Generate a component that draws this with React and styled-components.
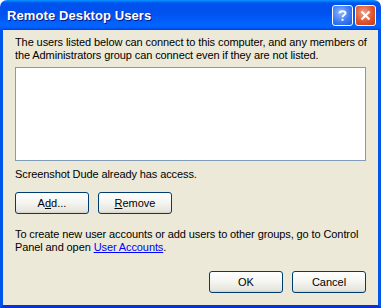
import React from 'react';
import styled, { createGlobalStyle } from 'styled-components';

const GlobalStyle = createGlobalStyle`
    html, body {
        margin: 0;
        padding: 0;
        background: #fff;
    }
`;

const Window = styled.div`
    width: 381px;
    height: 308px;
    display: flex;
    flex-direction: column;
    box-sizing: border-box;
    font-family: "Liberation Sans", Arial, sans-serif;
    font-size: 11px;
    color: #000;
`;

const TitleBar = styled.div`
    height: 30px;
    flex-shrink: 0;
    display: flex;
    align-items: center;
    padding: 0 5px 0 7px;
    border-radius: 7px 7px 0 0;
    background: linear-gradient(to bottom,
        #0997ff 0%, #0053ee 10%, #0050ee 40%, #0066ff 85%, #005bff 93%, #003dd7 100%);
`;

const Title = styled.div`
    flex-grow: 1;
    color: #fff;
    font-family: "Liberation Sans", Arial, sans-serif;
    font-weight: bold;
    font-size: 13px;
    letter-spacing: 0.1px;
    text-shadow: 1px 1px 0 #0a1883;
    padding-top: 1px;
`;

const Controls = styled.div`
    display: flex;
    gap: 2px;
`;

const CtrlButton = styled.div`
    width: 21px;
    height: 21px;
    box-sizing: border-box;
    border: 1px solid #fff;
    border-radius: 3px;
    display: flex;
    align-items: center;
    justify-content: center;
    background: ${p => p.close
        ? 'radial-gradient(circle at 40% 35%, #f3a08a 0%, #e0562f 55%, #c23b12 100%)'
        : 'radial-gradient(circle at 40% 35%, #8fb6ff 0%, #3b7bf5 55%, #1f55d8 100%)'};
`;

const Frame = styled.div`
    flex-grow: 1;
    display: flex;
    flex-direction: column;
    background: #ece9d8;
    border: 3px solid #0055ea;
    border-top: none;
    border-bottom-color: #0831d9;
    padding: 6px 12px 0 12px;
`;

const Text = styled.p`
    margin: 0;
    line-height: 13px;
    white-space: nowrap;
    letter-spacing: -0.1px;
`;

const ListBox = styled.div`
    height: 92px;
    margin: 5px 0 0 0;
    background: #fff;
    border: 1px solid #7f9db9;
`;

const StatusText = styled(Text)`
    margin-top: 7px;
`;

const ButtonRow = styled.div`
    display: flex;
    gap: 9px;
    justify-content: ${p => p.end ? 'flex-end' : 'flex-start'};
    margin-top: ${p => p.gap}px;
`;

const Button = styled.button`
    width: 74px;
    height: 22px;
    box-sizing: border-box;
    border: 1px solid #003c74;
    border-radius: 3px;
    background: linear-gradient(to bottom, #ffffff 0%, #f4f4f0 50%, #e6e5de 90%, #d6d0c5 100%);
    font-family: "Liberation Sans", Arial, sans-serif;
    font-size: 11px;
    color: #000;
    padding: 0;
`;

const InfoText = styled(Text)`
    margin-top: 14px;
`;

const Link = styled.a`
    color: #0000ff;
    text-decoration: underline;
`;

const Key = styled.span`
    text-decoration: underline;
`;

export default function App() {
    return (
        <>
            <GlobalStyle />
            <Window>
                <TitleBar>
                    <Title>Remote Desktop Users</Title>
                    <Controls>
                        <CtrlButton>
                            <svg width="13" height="13" viewBox="0 0 13 13">
                                <path d="M3.5 4.2 C3.5 1.5 9.5 1.5 9.5 4.2 C9.5 6 6.5 6 6.5 8.2" fill="none" stroke="#fff" strokeWidth="2" />
                                <rect x="5.5" y="9.8" width="2" height="2" fill="#fff" />
                            </svg>
                        </CtrlButton>
                        <CtrlButton close>
                            <svg width="13" height="13" viewBox="0 0 13 13">
                                <path d="M2.5 2.5 L10.5 10.5 M10.5 2.5 L2.5 10.5" stroke="#fff" strokeWidth="2.2" />
                            </svg>
                        </CtrlButton>
                    </Controls>
                </TitleBar>
                <Frame>
                    <Text>
                        The users listed below can connect to this computer, and any members of<br />
                        the Administrators group can connect even if they are not listed.
                    </Text>
                    <ListBox />
                    <StatusText>Screenshot Dude already has access.</StatusText>
                    <ButtonRow gap={11}>
                        <Button>A<Key>d</Key>d...</Button>
                        <Button><Key>R</Key>emove</Button>
                    </ButtonRow>
                    <InfoText>
                        To create new user accounts or add users to other groups, go to Control<br />
                        Panel and open <Link>User Accounts</Link>.
                    </InfoText>
                    <ButtonRow end gap={17}>
                        <Button>OK</Button>
                        <Button>Cancel</Button>
                    </ButtonRow>
                </Frame>
            </Window>
        </>
    );
}
